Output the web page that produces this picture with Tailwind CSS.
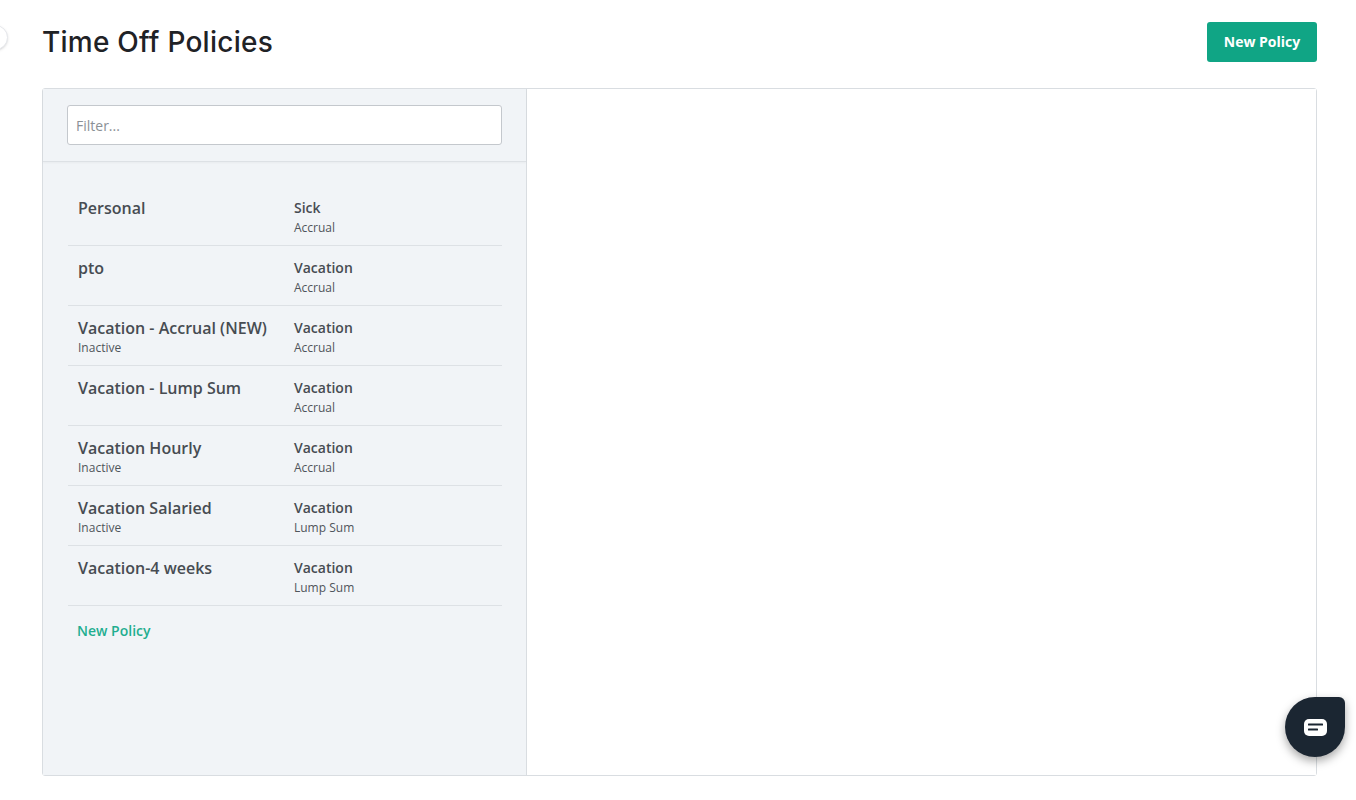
<!DOCTYPE html>
<html lang="en">
<head>
  <meta charset="UTF-8">
  <title>Time Off Policies</title>
  <script src="https://cdn.jsdelivr.net/npm/@tailwindcss/browser@4"></script>
</head>
<body class="bg-white font-['Open_Sans',sans-serif] h-[800px] overflow-hidden relative">
  <!-- sidebar toggle, mostly off screen -->
  <div class="absolute left-[-17px] top-[25px] w-[25px] h-[25px] rounded-full bg-white border border-gray-200 shadow"></div>

  <main class="pl-[42px] pr-[39px] pt-[22px]">
    <header class="flex justify-between items-center h-[40px] mb-[26px]">
      <h1 class="font-['Inter',sans-serif] font-medium text-[28px] text-[#1f2226] tracking-[0.25px]">Time Off Policies</h1>
      <button class="w-[110px] h-[40px] bg-[#10a585] text-white text-sm font-bold rounded-[3px]">New Policy</button>
    </header>

    <section class="flex h-[688px] border border-[#d9dde1] rounded-[3px]">
      <!-- policy list -->
      <div class="w-[484px] bg-[#f1f4f7] border-r border-[#d9dde1]">
        <div class="h-[73px] px-[24px] pt-[16px] border-b border-[#dde1e5] shadow-[0_1px_2px_rgba(0,0,0,0.04)]">
          <input type="text" placeholder="Filter..." class="w-[435px] h-[40px] px-[8px] bg-white border border-[#c4c8cd] rounded-[3px] text-sm placeholder:text-[#8b9096]">
        </div>
        <ul class="mx-[25px] mt-[24px] w-[434px]">
          <li class="flex h-[60px] border-b border-[#dde1e5] pl-[10px] pt-[11px]">
            <div class="w-[216px]"><p class="text-base leading-[22px] font-semibold text-[#474c52]">Personal</p></div>
            <div><p class="text-sm leading-[22px] font-semibold text-[#474c52]">Sick</p><p class="text-xs leading-[17px] text-[#50555b]">Accrual</p></div>
          </li>
          <li class="flex h-[60px] border-b border-[#dde1e5] pl-[10px] pt-[11px]">
            <div class="w-[216px]"><p class="text-base leading-[22px] font-semibold text-[#474c52]">pto</p></div>
            <div><p class="text-sm leading-[22px] font-semibold text-[#474c52]">Vacation</p><p class="text-xs leading-[17px] text-[#50555b]">Accrual</p></div>
          </li>
          <li class="flex h-[60px] border-b border-[#dde1e5] pl-[10px] pt-[11px]">
            <div class="w-[216px]"><p class="text-base leading-[22px] font-semibold text-[#474c52]">Vacation - Accrual (NEW)</p><p class="text-xs leading-[17px] text-[#50555b]">Inactive</p></div>
            <div><p class="text-sm leading-[22px] font-semibold text-[#474c52]">Vacation</p><p class="text-xs leading-[17px] text-[#50555b]">Accrual</p></div>
          </li>
          <li class="flex h-[60px] border-b border-[#dde1e5] pl-[10px] pt-[11px]">
            <div class="w-[216px]"><p class="text-base leading-[22px] font-semibold text-[#474c52]">Vacation - Lump Sum</p></div>
            <div><p class="text-sm leading-[22px] font-semibold text-[#474c52]">Vacation</p><p class="text-xs leading-[17px] text-[#50555b]">Accrual</p></div>
          </li>
          <li class="flex h-[60px] border-b border-[#dde1e5] pl-[10px] pt-[11px]">
            <div class="w-[216px]"><p class="text-base leading-[22px] font-semibold text-[#474c52]">Vacation Hourly</p><p class="text-xs leading-[17px] text-[#50555b]">Inactive</p></div>
            <div><p class="text-sm leading-[22px] font-semibold text-[#474c52]">Vacation</p><p class="text-xs leading-[17px] text-[#50555b]">Accrual</p></div>
          </li>
          <li class="flex h-[60px] border-b border-[#dde1e5] pl-[10px] pt-[11px]">
            <div class="w-[216px]"><p class="text-base leading-[22px] font-semibold text-[#474c52]">Vacation Salaried</p><p class="text-xs leading-[17px] text-[#50555b]">Inactive</p></div>
            <div><p class="text-sm leading-[22px] font-semibold text-[#474c52]">Vacation</p><p class="text-xs leading-[17px] text-[#50555b]">Lump Sum</p></div>
          </li>
          <li class="flex h-[60px] border-b border-[#dde1e5] pl-[10px] pt-[11px]">
            <div class="w-[216px]"><p class="text-base leading-[22px] font-semibold text-[#474c52]">Vacation-4 weeks</p></div>
            <div><p class="text-sm leading-[22px] font-semibold text-[#474c52]">Vacation</p><p class="text-xs leading-[17px] text-[#50555b]">Lump Sum</p></div>
          </li>
        </ul>
        <a href="#" class="block ml-[34px] mt-[15px] text-sm leading-[20px] font-semibold text-[#1fae90]">New Policy</a>
      </div>
      <!-- detail pane, empty -->
      <div class="flex-1 bg-white"></div>
    </section>
  </main>

  <!-- chat widget -->
  <div class="absolute left-[1285px] top-[697px] w-[60px] h-[60px] bg-[#1b2632] rounded-[30px] rounded-tr-[6px] shadow-[0_4px_10px_rgba(0,0,0,0.35)] flex items-center justify-center">
    <svg width="23" height="17" viewBox="0 0 23 17">
      <rect width="23" height="17" rx="5" fill="#fff"/>
      <rect x="4" y="4.5" width="15" height="2" rx="0.5" fill="#1b2632"/>
      <rect x="4" y="9.5" width="10" height="2" rx="0.5" fill="#1b2632"/>
    </svg>
  </div>
</body>
</html>
